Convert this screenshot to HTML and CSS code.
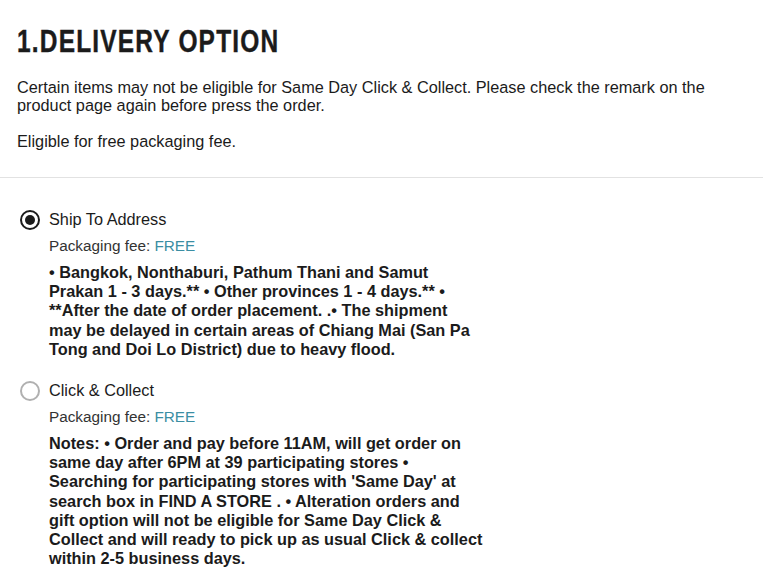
FILE: index.html
```html
<!DOCTYPE html>
<html lang="en">
<head>
    <meta charset="UTF-8">
    <meta name="viewport" content="width=device-width, initial-scale=1.0">
    <title>Delivery option</title>
    <link rel="stylesheet" href="styles.css">
</head>
<body>

<div class="delivery">
    <div class="delivery-head">
        <h2><span class="title-text">1.DELIVERY OPTION</span></h2>
        <p>Certain items may not be eligible for Same Day Click &amp; Collect. Please check the remark on the product page again before press the order.</p>
        <p>Eligible for free packaging fee.</p>
    </div>

    <div class="options">
        <label class="option">
            <input type="radio" name="delivery" value="ship" checked>
            <span class="radio"></span>
            <span class="option-body">
                <span class="option-title">Ship To Address</span>
                <span class="fee">Packaging fee: <span class="free">FREE</span></span>
                <span class="note">• Bangkok, Nonthaburi, Pathum Thani and Samut Prakan 1 - 3 days.** • Other provinces 1 - 4 days.** • **After the date of order placement. .• The shipment may be delayed in certain areas of Chiang Mai (San Pa Tong and Doi Lo District) due to heavy flood.</span>
            </span>
        </label>

        <label class="option">
            <input type="radio" name="delivery" value="collect">
            <span class="radio"></span>
            <span class="option-body">
                <span class="option-title">Click &amp; Collect</span>
                <span class="fee">Packaging fee: <span class="free">FREE</span></span>
                <span class="note">Notes: • Order and pay before 11AM, will get order on same day after 6PM at 39 participating stores • Searching for participating stores with 'Same Day' at search box in FIND A STORE . • Alteration orders and gift option will not be eligible for Same Day Click &amp; Collect and will ready to pick up as usual Click &amp; collect within 2-5 business days.</span>
            </span>
        </label>
    </div>
</div>

</body>
</html>
```

FILE: styles.css
```css
body {
    margin: 0;
    font-family: 'Liberation Sans', Arial, sans-serif;
    color: #1b1b1b;
    background-color: #ffffff;
}
.delivery-head {
    padding: 24px 17px 27px;
    border-bottom: 1px solid #e2e2e2;
}
.delivery-head h2 {
    margin: 0 0 18px;
    font-family: 'Liberation Sans', Arial, sans-serif;
    font-weight: bold;
    font-size: 31px;
    line-height: 36px;
    letter-spacing: 1.5px;
    color: #1b1b1b;
}
/* no condensed face installed, so squeeze the regular bold one */
.title-text {
    display: inline-block;
    transform: scaleX(0.79);
    transform-origin: left center;
    -webkit-text-stroke: 0.4px #1b1b1b;
}
.delivery-head p {
    margin: 0 0 18px;
    font-size: 16.3px;
    line-height: 18px;
}
.delivery-head p:last-child {
    margin-bottom: 0;
}
.options {
    padding: 32px 20px 0;
}
.option {
    display: flex;
    align-items: flex-start;
    gap: 9px;
    margin-bottom: 22px;
    cursor: pointer;
}
.option input {
    display: none;
}
.radio {
    flex: none;
    width: 16px;
    height: 16px;
    border: 2px solid #b0b0b0;
    border-radius: 50%;
    position: relative;
}
.option input:checked + .radio {
    border-color: #1b1b1b;
}
.option input:checked + .radio::after {
    content: '';
    position: absolute;
    top: 3px;
    left: 3px;
    width: 10px;
    height: 10px;
    border-radius: 50%;
    background-color: #1b1b1b;
}
.option-body {
    display: flex;
    flex-direction: column;
    width: 435px;
}
.option-title {
    font-size: 16.3px;
    line-height: 18px;
}
.fee {
    margin-top: 9px;
    font-size: 15.3px;
    line-height: 18px;
    color: #333;
}
.free {
    color: #3b8ea3;
}
.note {
    margin-top: 8px;
    font-size: 16.3px;
    font-weight: bold;
    line-height: 19.2px;
}
```
